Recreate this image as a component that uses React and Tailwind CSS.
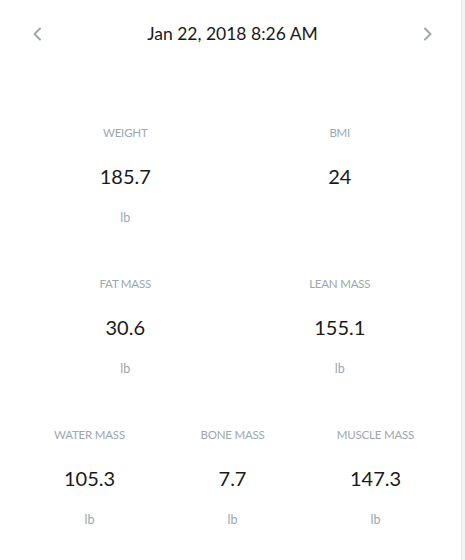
import React from 'react';

const rows = [
    [
        { label: 'WEIGHT', value: '185.7', unit: 'lb' },
        { label: 'BMI', value: '24', unit: '' },
    ],
    [
        { label: 'FAT MASS', value: '30.6', unit: 'lb' },
        { label: 'LEAN MASS', value: '155.1', unit: 'lb' },
    ],
    [
        { label: 'WATER MASS', value: '105.3', unit: 'lb' },
        { label: 'BONE MASS', value: '7.7', unit: 'lb' },
        { label: 'MUSCLE MASS', value: '147.3', unit: 'lb' },
    ],
];

const Chevron = ({ dir }) => (
    <svg width="10" height="14" viewBox="0 0 10 14" fill="none" stroke="#9ca7af" strokeWidth="2" strokeLinecap="round" strokeLinejoin="round">
        {dir === 'left' ? <path d="M8 1.5 L2.5 7 L8 12.5" /> : <path d="M2 1.5 L7.5 7 L2 12.5" />}
    </svg>
);

const Metric = ({ label, value, unit }) => (
    <div className="flex flex-col items-center">
        <div className="h-4 leading-4 text-[11.5px] tracking-[-0.2px] text-[#9ca7af]">{label}</div>
        <div className="mt-[21px] h-7 leading-7 text-[20px] text-[#1a1a1a]">{value}</div>
        <div className="mt-[20px] h-4 leading-4 text-[12.5px] text-[#9ca7af]">{unit}</div>
    </div>
);

const App = () => {
    return (
        <div className="relative w-[465px] h-[560px] bg-white overflow-hidden" style={{ fontFamily: 'Lato, "Open Sans", sans-serif' }}>
            <div className="h-[68px] flex items-center justify-between px-[32px]">
                <button className="w-[10px] flex items-center justify-center">
                    <Chevron dir="left" />
                </button>
                <div className="text-[17.5px] text-[#1a1a1a]">Jan 22, 2018 8:26 AM</div>
                <button className="w-[10px] flex items-center justify-center">
                    <Chevron dir="right" />
                </button>
            </div>

            <div className="px-[18px] mt-[57px] flex flex-col gap-[50px]">
                {rows.map((row, i) => (
                    <div key={i} className={row.length === 3 ? 'grid grid-cols-3' : 'grid grid-cols-2'}>
                        {row.map((m) => (
                            <Metric key={m.label} {...m} />
                        ))}
                    </div>
                ))}
            </div>

            {/* scrollbar strip */}
            <div className="absolute top-0 right-0 h-full w-[4px] bg-[#f3f3f3] border-l border-[#e6e6e6]" />
        </div>
    );
};

export default App;
